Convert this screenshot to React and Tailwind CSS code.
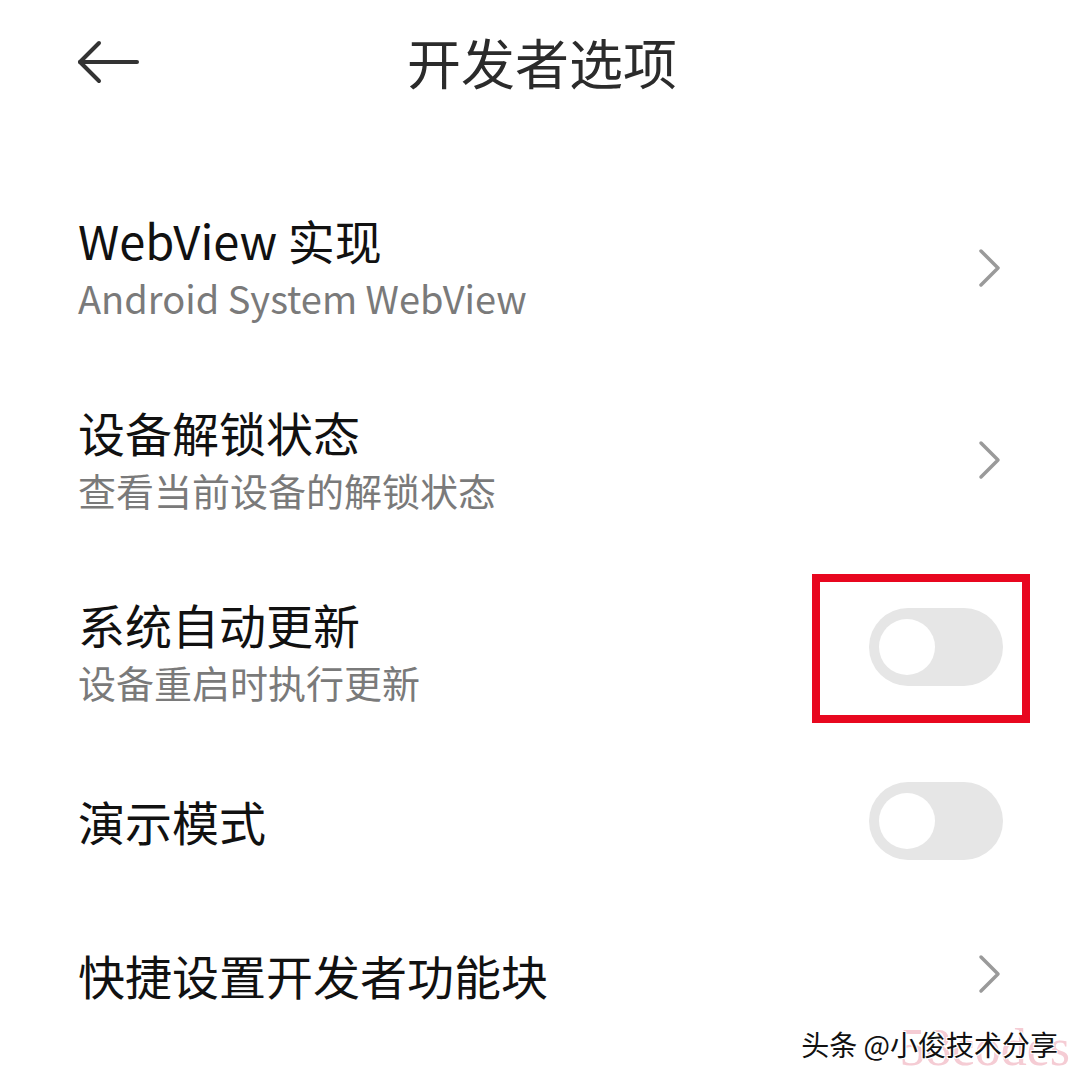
const font = { fontFamily: '"Noto Sans CJK SC", "Noto Sans", sans-serif' };

const Chevron = () => (
    <svg width="26" height="40" viewBox="0 0 26 40" className="shrink-0 mb-[2px]">
        <polyline points="4,3 21,20 4,37" fill="none" stroke="#9a9a9a" strokeWidth="3.5" strokeLinecap="round" strokeLinejoin="round" />
    </svg>
);

const Toggle = ({ up }) => (
    <div className={`w-[134px] h-[78px] rounded-full bg-[#e6e6e6] flex items-center pl-[10px] shrink-0 ${up ? 'mb-[12px]' : ''}`}>
        <div className="w-[56px] h-[56px] rounded-full bg-white" />
    </div>
);

const Row = ({ title, sub, right, h, boxed }) => (
    <div className={`relative flex items-center justify-between pl-[78px] pr-[77px] ${h}`}>
        <div className="flex flex-col">
            <span className="text-[47px] leading-[58px] text-[#111]">{title}</span>
            {sub && <span className="text-[38px] leading-[58px] text-[#7a7a7a]">{sub}</span>}
        </div>
        {right}
        {boxed && (
            <div className="absolute left-[812px] top-[17px] w-[218px] h-[149px] border-[8px] border-[#e8071f]" />
        )}
    </div>
);

export default function App() {
    return (
        <div className="relative w-[1080px] h-[1080px] bg-white overflow-hidden" style={font}>
            {/* Header */}
            <div className="relative h-[124px] flex items-center justify-center">
                <svg width="64" height="44" viewBox="0 0 64 44" className="absolute left-[77px] top-[40px]">
                    <polyline points="22,3 3,22 22,41" fill="none" stroke="#333" strokeWidth="4" strokeLinecap="round" strokeLinejoin="round" />
                    <line x1="3" y1="22" x2="60" y2="22" stroke="#333" strokeWidth="4" strokeLinecap="round" />
                </svg>
                <span className="text-[54px] leading-none text-[#2b2b2b] pl-[4px]">开发者选项</span>
            </div>

            <div className="mt-[49px] flex flex-col">
                <Row h="h-[192px]" title="WebView 实现" sub="Android System WebView" right={<Chevron />} />
                <Row h="h-[192px]" title="设备解锁状态" sub="查看当前设备的解锁状态" right={<Chevron />} />
                <Row h="h-[192px]" title="系统自动更新" sub="设备重启时执行更新" right={<Toggle up />} boxed />
                <Row h="h-[144px]" title="演示模式" right={<Toggle />} />
                <Row h="h-[164px]" title="快捷设置开发者功能块" right={<Chevron />} />
            </div>

            {/* Watermark */}
            <div className="absolute right-[10px] bottom-[6px] text-[52px] leading-none text-[#f5ccd4]" style={{ fontFamily: '"Liberation Serif", serif' }}>
                58codes
            </div>
            <div className="absolute right-[22px] bottom-[22px] text-[28px] leading-none text-[#111]" style={{ textShadow: '1px 1px 0 #fff, -1px -1px 0 #fff, 1px -1px 0 #fff, -1px 1px 0 #fff' }}>
                头条 @小俊技术分享
            </div>
        </div>
    );
}
